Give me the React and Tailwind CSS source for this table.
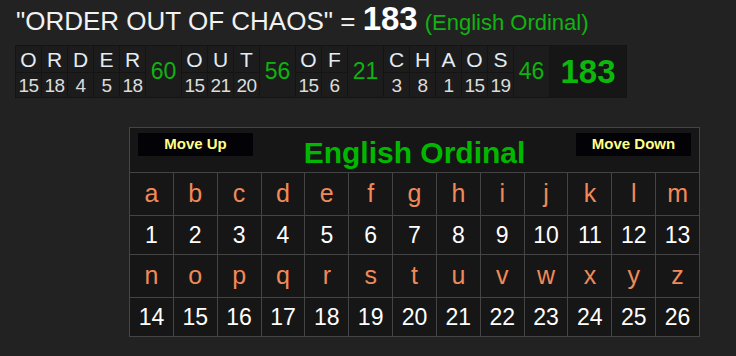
// Gematria breakdown page: phrase total, per-letter breakdown and cipher chart

const words = [
  { letters: ['O', 'R', 'D', 'E', 'R'], values: [15, 18, 4, 5, 18], sum: 60 },
  { letters: ['O', 'U', 'T'], values: [15, 21, 20], sum: 56 },
  { letters: ['O', 'F'], values: [15, 6], sum: 21 },
  { letters: ['C', 'H', 'A', 'O', 'S'], values: [3, 8, 1, 15, 19], sum: 46 },
];

const alphabet = 'abcdefghijklmnopqrstuvwxyz'.split('');
const firstHalf = alphabet.slice(0, 13);
const secondHalf = alphabet.slice(13);

const LetterColumn = ({ letter, value }) => (
  <div className="flex flex-col gap-px w-[25px]">
    <div className="h-[26px] bg-[#1c1c1c] flex items-center justify-center text-[21px] leading-none text-[#e4ecf4]">
      {letter}
    </div>
    <div className="h-[24px] bg-[#1c1c1c] flex items-center justify-center text-[19px] leading-none tracking-[-0.5px] text-[#dcdcdc]">
      {value}
    </div>
  </div>
);

const MoveButton = ({ children }) => (
  <div className="w-[115px] h-[23px] bg-[#020207] flex items-center justify-center text-[15px] font-bold text-[#ffff88]">
    {children}
  </div>
);

const App = () => {
  return (
    <div className="h-[356px] bg-[#222222] font-['Liberation_Sans',Arial,sans-serif] overflow-hidden">
      {/* Phrase total */}
      <div className="pl-4 pt-[2px] flex items-baseline whitespace-pre">
        <span className="text-[26px] leading-none text-[#f2f2f2]">"ORDER OUT OF CHAOS" = </span>
        <span className="text-[33px] leading-none font-bold text-white">183</span>
        <span className="text-[22px] leading-none text-[#11b311] ml-[7px]">(English Ordinal)</span>
      </div>

      {/* Letter breakdown */}
      <div className="ml-[15px] mt-[10px] inline-flex gap-px p-px bg-[#141414] align-top">
        {words.map((word, i) => (
          <div key={i} className="flex gap-px">
            {word.letters.map((letter, j) => (
              <LetterColumn key={j} letter={letter} value={word.values[j]} />
            ))}
            <div className="w-[35px] bg-[#1c1c1c] flex items-center justify-center text-[23px] text-[#0fb30f]">
              {word.sum}
            </div>
          </div>
        ))}
        <div className="w-[76px] bg-[#161616] flex items-center justify-center text-[33px] font-bold text-[#0cb80c]">
          183
        </div>
      </div>

      {/* Cipher chart */}
      <div className="ml-[129px] mt-[29px] w-[571px] bg-[#444444] p-px flex flex-col gap-px">
        <div className="h-[44px] bg-[#161616] flex items-start justify-between px-[8px] pt-[5px]">
          <MoveButton>Move Up</MoveButton>
          <div className="text-[30px] font-bold text-[#00b800] leading-none mt-[5px]">English Ordinal</div>
          <MoveButton>Move Down</MoveButton>
        </div>
        {[firstHalf, secondHalf].map((row, r) => (
          <div key={r} className="flex flex-col gap-px">
            <div className="grid grid-cols-13 gap-px">
              {row.map((ch) => (
                <div key={ch} className="h-[42px] bg-[#161616] flex items-center justify-center text-[25px] text-[#f08a58]">
                  {ch}
                </div>
              ))}
            </div>
            <div className="grid grid-cols-13 gap-px">
              {row.map((ch, k) => (
                <div key={ch} className="h-[38px] bg-[#161616] flex items-center justify-center text-[23px] text-white">
                  {r * 13 + k + 1}
                </div>
              ))}
            </div>
          </div>
        ))}
      </div>
    </div>
  );
};

export default App;
